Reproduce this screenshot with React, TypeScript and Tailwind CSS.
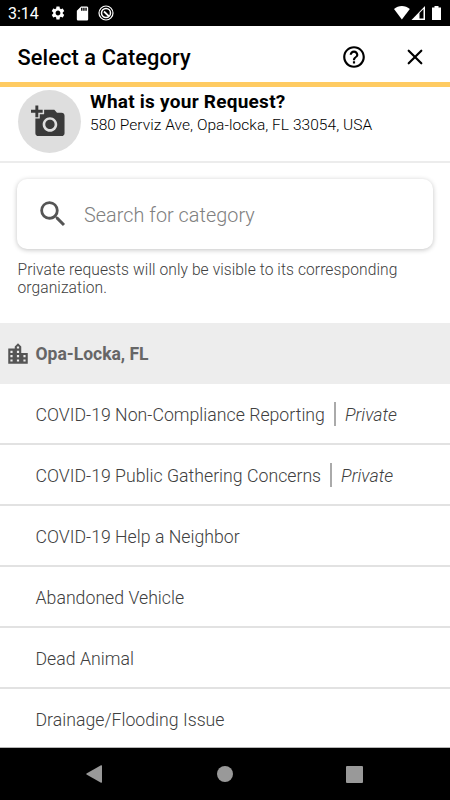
import React from 'react';
import { MdAddAPhoto, MdHelpOutline, MdLocationCity, MdSdCard, MdSearch, MdSettings } from 'react-icons/md';

type Category = { name: string; isPrivate?: boolean };

const categories: Category[] = [
  { name: 'COVID-19 Non-Compliance Reporting', isPrivate: true },
  { name: 'COVID-19 Public Gathering Concerns', isPrivate: true },
  { name: 'COVID-19 Help a Neighbor' },
  { name: 'Abandoned Vehicle' },
  { name: 'Dead Animal' },
  { name: 'Drainage/Flooding Issue' },
];

function StatusBar() {
  return (
    <div className="flex h-[26px] shrink-0 items-center bg-black pl-[8px] pr-[8px] text-white">
      <span className="w-[42px] pt-[2px] text-[16px] leading-[24px]">3:14</span>
      <MdSettings size={16} className="shrink-0" />
      <MdSdCard size={17} className="ml-[8px] shrink-0" />
      <svg className="ml-[7px] shrink-0" width="16" height="16" viewBox="0 0 16 16" fill="none" stroke="white">
        <circle cx="8" cy="8" r="7" strokeWidth="1.2" />
        <circle cx="8" cy="8" r="4.5" strokeWidth="1.5" />
        <path d="M6 6.5 11 11.4" strokeWidth="1.8" />
      </svg>
      <svg className="ml-auto" width="49" height="16" viewBox="0 0 49 16">
        <path d="M1 4.1C5.4 0 12.4 0 16.8 4.1L8.9 14.6Z" fill="white" />
        <path d="M32 1v14H18.5Z" fill="white" />
        <path d="M26.5 8 30.5 4V13.5h-4Z" fill="black" />
        <path d="M41.5 1h4v1.5H48V15h-9V2.5h2.5Z" fill="white" />
      </svg>
    </div>
  );
}

function Header() {
  return (
    <header className="flex h-[61px] shrink-0 items-center border-b-[5px] border-[#ffcb62] pl-[17.5px] pr-[27px] pt-[5px] text-black">
      <h1 className="pt-[2px] text-[21.8px] font-medium leading-[26px] tracking-[0.1px]">Select a Category</h1>
      <MdHelpOutline size={26} className="ml-auto" />
      <svg className="ml-[40px]" width="16" height="16" viewBox="0 0 16 16" stroke="black" strokeWidth="2.2" strokeLinecap="round">
        <path d="M1.7 1.7 14.3 14.3M14.3 1.7 1.7 14.3" />
      </svg>
    </header>
  );
}

function Request() {
  return (
    <section className="flex h-[76px] shrink-0 border-b-2 border-[#ececec] pl-[17.5px] pt-[2.5px]">
      <div className="flex size-[63.5px] items-center rounded-full bg-[#dedede] pl-[13.5px]">
        <MdAddAPhoto size={35} color="#3a3a3a" className="-mt-[0.5px]" />
      </div>
      <div className="ml-[9px] whitespace-nowrap pt-[0.5px] text-black">
        <h2 className="text-[19px] font-bold leading-[24px] tracking-[0.25px]">What is your Request?</h2>
        <p className="text-[15.5px] font-light leading-[23px] tracking-[0.05px]">580 Perviz Ave, Opa-locka, FL 33054, USA</p>
      </div>
    </section>
  );
}

export default function App() {
  return (
    <div className="flex h-[800px] w-[450px] flex-col overflow-hidden bg-white font-[Roboto,sans-serif] text-[#666]">
      <StatusBar />
      <Header />
      <Request />
      <section className="h-[160px] shrink-0 px-[17px] pt-[16px]">
        <div className="flex h-[70px] items-center rounded-[10px] bg-white pl-[19px] shadow-[0_1px_5px_rgba(0,0,0,0.24)]">
          <MdSearch size={34} color="#555" />
          <span className="ml-[14px] pt-[3px] text-[19.8px] font-light leading-[26px] tracking-[0.05px] text-[#808080]">Search for category</span>
        </div>
        <p className="mt-[12px] pl-[0.5px] text-[15.6px] font-light leading-[18px] tracking-[0.08px] text-[#404040]">
          Private requests will only be visible to its corresponding organization.
        </p>
      </section>
      <div className="flex h-[61px] shrink-0 items-center bg-[#ededed] pl-[5px]">
        <MdLocationCity size={26} color="#555" />
        <h3 className="ml-[4.5px] text-[17.5px] font-bold leading-[24px]">Opa-Locka, FL</h3>
      </div>
      <ul className="h-[364px] shrink-0 overflow-hidden border-b border-[#b5b5b5]">
        {categories.map((c) => (
          <li key={c.name} className="flex h-[61px] items-center whitespace-nowrap border-b-2 border-[#e2e2e2] pl-[35.5px] text-[17.7px] font-light leading-[24px] tracking-[0.01px] text-[#404040]">
            <span className="pt-[2px]">{c.name}</span>
            {c.isPrivate && (
              <>
                <span className="ml-[9px] mr-[9px] h-[24px] w-[2px] bg-[#aaa]" />
                <span className="pt-[2px] italic">Private</span>
              </>
            )}
          </li>
        ))}
      </ul>
      <nav className="flex h-[52px] shrink-0 items-center bg-black pl-[86px] pr-[87px]">
        <svg width="16" height="18" viewBox="0 0 16 18" fill="#999">
          <path d="M15 .3Q16 0 16 1V17Q16 18 15 17.7L.5 9.5Q0 9 .5 8.5Z" />
        </svg>
        <div className="ml-[115px] size-[16px] rounded-full bg-[#999]" />
        <div className="ml-auto size-[17px] rounded-[1px] bg-[#999]" />
      </nav>
    </div>
  );
}
